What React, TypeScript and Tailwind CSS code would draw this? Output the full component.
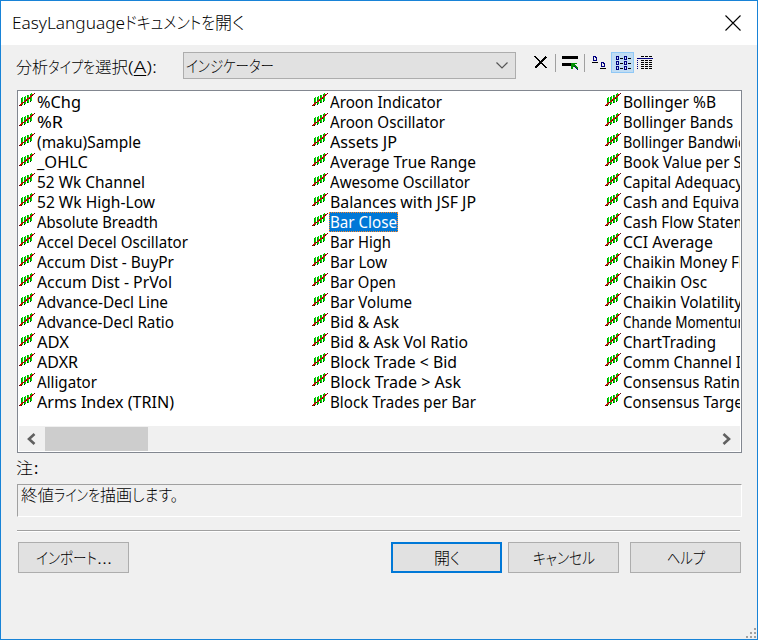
import React, { useLayoutEffect, useRef } from "react";

type Entry = [name: string, width?: number];

const columns: Entry[][] = [
  [["%Chg", 44], ["%R", 26], ["(maku)Sample", 104], ["_OHLC", 51], ["52 Wk Channel", 108], ["52 Wk High-Low", 118], ["Absolute Breadth", 121], ["Accel Decel Oscillator", 151], ["Accum Dist - BuyPr", 137], ["Accum Dist - PrVol", 135], ["Advance-Decl Line", 131], ["Advance-Decl Ratio", 137], ["ADX", 32], ["ADXR", 41], ["Alligator", 60], ["Arms Index (TRIN)", 137]],
  [["Aroon Indicator", 112], ["Aroon Oscillator", 115], ["Assets JP", 67], ["Average True Range", 146], ["Awesome Oscillator", 140], ["Balances with JSF JP", 146], ["Bar Close", 67], ["Bar High", 61], ["Bar Low", 57], ["Bar Open", 66], ["Bar Volume", 82], ["Bid & Ask", 69], ["Bid & Ask Vol Ratio", 138], ["Block Trade < Bid", 127], ["Block Trade > Ask", 131], ["Block Trades per Bar", 146]],
  [["Bollinger %B", 93], ["Bollinger Bands", 110], ["Bollinger Bandwidth", 138], ["Book Value per Share"], ["Capital Adequacy", 120], ["Cash and Equivalents"], ["Cash Flow Statement"], ["CCI Average", 90], ["Chaikin Money Flow"], ["Chaikin Osc", 84], ["Chaikin Volatility", 119], ["Chande Momentum", 127], ["ChartTrading", 93], ["Comm Channel Index"], ["Consensus Rating"], ["Consensus Target"]],
];

/* Condenses or expands a run of text horizontally to a fixed width. */
function Fit({ width, className = "", children }: { width?: number; className?: string; children: React.ReactNode }) {
  const ref = useRef<HTMLSpanElement>(null);
  useLayoutEffect(() => {
    const el = ref.current;
    if (!el) return;
    el.style.transform = "none";
    const natural = el.getBoundingClientRect().width;
    el.style.transform = `scaleX(${width ? width / natural : 0.97})`;
  }, [width]);
  return (
    <span className={`inline-block whitespace-nowrap ${className}`} style={{ width }}>
      <span ref={ref} className="inline-block origin-left">
        {children}
      </span>
    </span>
  );
}

function IndicatorIcon() {
  return (
    <svg width="16" height="16" viewBox="0 0 16 16" shapeRendering="crispEdges" className="shrink-0">
      <path d="M3 5h1v8h-1zM6 4h1v8h-1zM9 3h1v8h-1zM12 1h1v8h-1z" fill="#00e000" />
      <path d="M2 6h1v7h-1zM5 5h1v7h-1zM8 3h1v7h-1zM11 2h1v7h-1z" fill="#00a000" />
      <path d="M2 13h1v1h-1zM5 12h1v1h-1zM8 10h1v1h-1zM11 9h1v1h-1z" fill="#002800" />
      <path d="M0 14L16 1.2" stroke="#d00000" strokeWidth="1.3" fill="none" />
      <path d="M0 13h1v1h-1zM4 10h1v1h-1zM7 8h1v1h-1zM10 6h1v1h-1zM13 3h1v1h-1zM15 1h1v1h-1z" fill="#600008" />
    </svg>
  );
}

function Chevron({ d, className }: { d: string; className: string }) {
  return (
    <svg width="12" height="12" viewBox="0 0 12 12" className={className}>
      <path d={d} fill="none" stroke="#606060" strokeWidth="2.6" />
    </svg>
  );
}

function Page({ x, y, small }: { x: number; y: number; small?: boolean }) {
  return (
    <path
      d={small ? `M${x} ${y}h3v1h-3zM${x} ${y}h1v4h-1zM${x + 2} ${y + 1}h1v3h-1zM${x} ${y + 3}h3v1h-3z` : `M${x} ${y}h3v1h-3zM${x} ${y}h1v5h-1zM${x + 3} ${y + 1}h1v4h-1zM${x} ${y + 4}h4v1h-4zM${x + 2} ${y + 1}h1v1h-1z`}
      fill="#000080"
    />
  );
}

function Toolbar() {
  return (
    <svg width="128" height="22" viewBox="0 0 128 22" shapeRendering="crispEdges">
      <path d="M5 4h2v1h1v1h1v1h1v1h1v1h1v1h1v1h1v1h1v1h1v1h1v1h1v1h-2v-1h-1v-1h-1v-1h-1v-1h-1v-1h-1v-1h-1v-1h-1v-1h-1v-1h-1v-1h-1v-1h-1z" fill="#000" />
      <path d="M17 4h-1v1h-1v1h-1v1h-1v1h-1v1h-1v1h-1v1h-1v1h-1v1h-1v1h-1v2h2v-1h1v-1h1v-1h1v-1h1v-1h1v-1h1v-1h1v-1h1v-1h1v-1h1z" fill="#000" />
      <path d="M26.5 2v18M55.5 2v18" stroke="#a0a0a0" />
      <path d="M33 4h16v3h-16zM33 11h9v3h-9z" fill="#000" />
      <path d="M42 11h6v1h-2v1h1v1h1v1h1v2h-1v-1h-1v-1h-1v-1h-1v1h-1v2h-2z" fill="#009000" />
      <path d="M45 14h1v1h1v1h1v1h1v1h-1v-1h-1v-1h-1v-1h-1z" fill="#000060" />
      <Page x={64} y={4} />
      <Page x={72} y={10} />
      <path d="M63 10h6v1h-6zM71 16h6v1h-6z" fill="#000" />
      <rect x="82.5" y="0.5" width="22" height="20" fill="#c0dcf3" stroke="#90c8f6" />
      {[4, 9, 14].map((y) => (
        <g key={y}>
          <Page x={87} y={y} small />
          <Page x={95} y={y} small />
          <path d={`M91 ${y + 2}h3v1h-3zM99 ${y + 2}h3v1h-3z`} fill="#000" />
        </g>
      ))}
      <path d="M108 6h16v1h-16z" fill="#000080" />
      <path d="M108.5 8v10" stroke="#000080" strokeDasharray="1 1" />
      <path d="M112 4.5h12M112 8.5h12M112 10.5h12M112 12.5h12M112 14.5h12M112 16.5h12" stroke="#000" strokeDasharray="3 1" />
    </svg>
  );
}

function Button({ children, primary }: { children: React.ReactNode; primary?: boolean }) {
  return (
    <div className={`flex h-[31px] w-[111px] items-center justify-center bg-[#e1e1e1] ${primary ? "border-2 border-[#0078d7]" : "border border-[#adadad]"}`}>
      {children}
    </div>
  );
}

const jp = "font-light whitespace-nowrap [font-feature-settings:'palt']";

export default function App() {
  return (
    <div className="flex h-[640px] w-[758px] flex-col overflow-hidden border border-[#1883d7] bg-[#f0f0f0] font-['Noto_Sans','Noto_Sans_CJK_JP',sans-serif] text-black">
      <header className="flex h-11 shrink-0 items-center justify-between bg-white pr-4 pl-[11px]">
        <h1 className={`${jp} flex items-baseline text-[17px]`}>
          <Fit width={113}>EasyLanguage</Fit>
          <Fit width={90}>ドキュメントを</Fit>
          <Fit width={17}>開</Fit>
          <Fit width={13}>く</Fit>
        </h1>
        <svg width="16" height="16" viewBox="0 0 16 16" className="-mt-px">
          <path d="M0.5 0.5L15.5 15.5M15.5 0.5L0.5 15.5" stroke="#000" strokeWidth="1.1" />
        </svg>
      </header>

      <div className="flex h-[45px] shrink-0 items-start pt-[7px] pl-[15px]">
        <div className={`${jp} flex w-[166px] items-baseline pt-[3px] text-base leading-6`}>
          <Fit width={32}>分析</Fit>
          <Fit width={47}>タイプを</Fit>
          <Fit width={33}>選択</Fit>
          <Fit width={29}>
            (<span className="underline underline-offset-2">A</span>):
          </Fit>
        </div>
        <div className="ml-px flex h-[27px] w-[333px] items-center justify-between border border-[#adadad] bg-[#e1e1e1] pr-[7px] pl-[2px]">
          <Fit width={88} className={`${jp} text-base`}>インジケーター</Fit>
          <svg width="12" height="7" viewBox="0 0 12 7">
            <path d="M0.5 0.5L6 6L11.5 0.5" fill="none" stroke="#555" strokeWidth="1.2" />
          </svg>
        </div>
        <div className="pl-[13px]">
          <Toolbar />
        </div>
      </div>

      <main className="mx-4 flex h-[363px] w-[725px] shrink-0 flex-col border border-[#828790] bg-white p-px">
        <div className="flex h-[334px] overflow-hidden">
          {columns.map((items, c) => (
            <ul key={c} className="w-[293px] shrink-0">
              {items.map(([name, width]) => (
                <li key={name} className="flex h-5 items-start">
                  <IndicatorIcon />
                  <span
                    className={`ml-px h-5 px-px text-[15.5px] leading-5 whitespace-nowrap ${
                      name === "Bar Close" ? "bg-[#0078d7] text-white outline-1 -outline-offset-1 outline-dotted outline-[#ff8728]" : ""
                    }`}
                  >
                    <Fit width={width}>{name}</Fit>
                  </span>
                </li>
              ))}
            </ul>
          ))}
        </div>
        <div className="flex h-[25px] items-center bg-[#f0f0f0]">
          <div className="w-[26px]">
            <Chevron d="M9.5 1L4 6L9.5 11" className="ml-[6px]" />
          </div>
          <div className="h-6 w-[103px] bg-[#cdcdcd]" />
          <Chevron d="M2.5 1L8 6L2.5 11" className="mr-[7px] ml-auto" />
        </div>
      </main>

      <div className={`${jp} h-[31px] shrink-0 pt-[3px] pl-[15px] text-base leading-6`}>
        <Fit width={17}>注</Fit>
        <span className="ml-px font-normal">:</span>
      </div>
      <div className="mx-4 h-[33px] w-[725px] shrink-0 border border-t-[#a0a0a0] border-r-white border-b-white border-l-[#a0a0a0] pl-[3px]">
        <p className={`${jp} flex items-baseline text-base leading-[21px]`}>
          <Fit width={33}>終値</Fit>
          <Fit width={46}>ラインを</Fit>
          <Fit width={32}>描画</Fit>
          <Fit width={46}>します。</Fit>
        </p>
      </div>
      <div className="mt-[13px] ml-4 h-0.5 w-[723px] shrink-0 border-t border-b border-t-[#a0a0a0] border-b-white" />
      <footer className={`${jp} mt-[10px] flex shrink-0 pl-[17px] text-base`}>
        <Button>
          <Fit width={61}>インポート</Fit>
          <Fit width={15}>...</Fit>
        </Button>
        <div className="ml-[262px] flex">
          <Button primary>
            <Fit width={16}>開</Fit>
            <Fit width={10}>く</Fit>
          </Button>
          <div className="ml-[6px]">
            <Button>
              <Fit width={62}>キャンセル</Fit>
            </Button>
          </div>
          <div className="ml-[11px]">
            <Button>
              <Fit width={38}>ヘルプ</Fit>
            </Button>
          </div>
        </div>
      </footer>
      <svg width="10" height="10" viewBox="0 0 10 10" className="mt-auto mr-px mb-px shrink-0 self-end">
        <path d="M8 0h2v2h-2zM4 4h2v2h-2zM8 4h2v2h-2zM0 8h2v2h-2zM4 8h2v2h-2zM8 8h2v2h-2z" fill="#a0a0a0" />
      </svg>
    </div>
  );
}
